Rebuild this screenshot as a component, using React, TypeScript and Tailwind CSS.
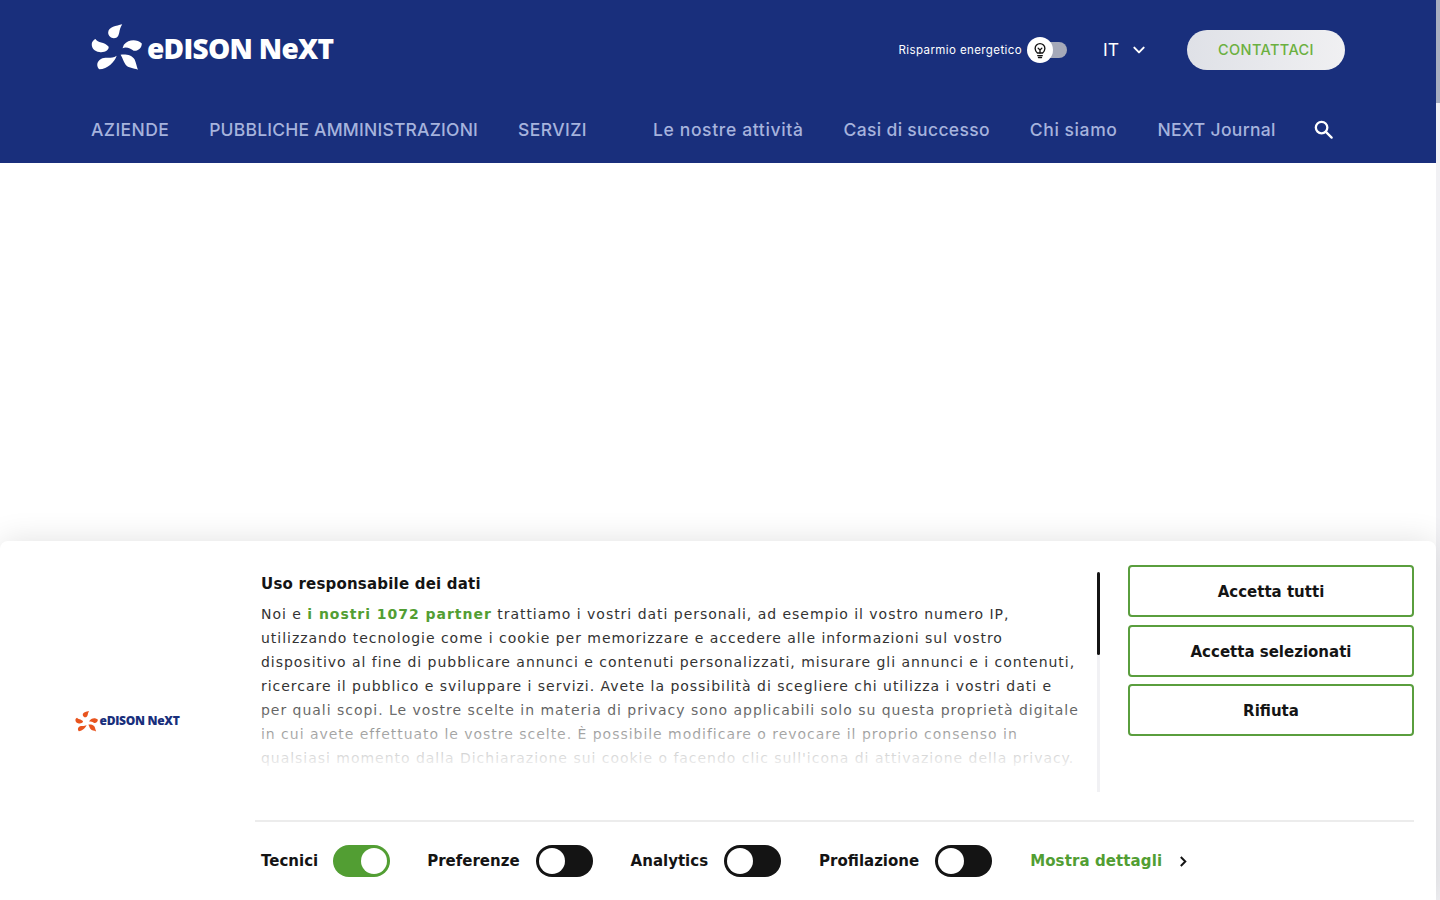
import React from "react";

function Mark({ className }: { className: string }) {
  return (
    <svg viewBox="30 30 165 150" className={className} fill="currentColor">
      <path d="M130 37C112 42 88 45 87 62C87 75 100 83 112 78C124 72 118 55 130 37Z" />
      <path d="M190 96C175 82 150 82 135 100L131 110C145 105 155 112 165 118C178 120 190 110 190 96Z" />
      <path d="M125 130C140 128 160 130 168 145C172 155 175 168 178 176C165 170 148 172 140 160C133 150 132 140 125 130Z" />
      <path d="M113 133C108 150 85 175 60 175C50 165 52 150 65 143C80 135 95 145 113 133Z" />
      <path d="M48 82C55 95 75 90 88 105C92 115 75 125 60 122C45 120 35 110 37 95C38 90 42 85 48 82Z" />
    </svg>
  );
}

function Toggle({ on }: { on?: boolean }) {
  return (
    <span className={`flex h-8 w-[57px] shrink-0 items-center rounded-full px-[3px] ${on ? "justify-end bg-[#529e33]" : "justify-start bg-[#141414]"}`}>
      <span className="h-[26px] w-[26px] rounded-full bg-white" />
    </span>
  );
}

function ActionButton({ children }: { children: React.ReactNode }) {
  return (
    <button className="flex h-[52px] w-[286px] items-center justify-center rounded-[4px] border-2 border-[#5a9e3e] bg-white pt-[2px] text-[15px] font-bold text-[#141414]">
      {children}
    </button>
  );
}

export default function App() {
  return (
    <div className="relative flex h-[900px] w-[1440px] overflow-hidden bg-white font-['DejaVu_Sans',sans-serif]">
      <main className="min-w-0 flex-1">
        <header className="flex h-[163px] flex-col bg-[#192f7c] pl-[91px] pr-[91px] font-['Inter',sans-serif]">
          <div className="flex h-[100px] items-center">
            <div className="flex items-center text-white">
              <Mark className="-ml-[2px] h-[49px] w-[55px] -translate-y-[4px]" />
              <span className="ml-[3px] -translate-y-[2px] font-['Open_Sans',sans-serif] text-[28px] font-extrabold leading-none tracking-[-0.7px]">eDISON NeXT</span>
            </div>
            <div className="ml-auto flex items-center">
              <span className="mt-[2px] text-[11.5px] tracking-[0.4px] text-white">Risparmio energetico</span>
              <span className="ml-[5px] flex h-4 w-10 items-center">
                <span className="relative z-10 flex h-[26px] w-[26px] items-center justify-center rounded-full bg-white">
                  <svg viewBox="0 0 24 24" className="h-[18px] w-[18px]" fill="none" stroke="#141414" strokeWidth="1.8" strokeLinecap="round" strokeLinejoin="round">
                    <path d="M8.5 16C7 14.6 5.5 13 5.5 10a6.5 6.5 0 0 1 13 0c0 3-1.500 4.600-3 6Z" />
                    <path d="M9 19.500h6M10 22h4M9.500 9.500 12 12l2.500-2.500M12 12v4" />
                  </svg>
                </span>
                <span className="-ml-[13px] h-4 w-[27px] rounded-r-full bg-[#a5a9b9]" />
              </span>
              <span className="ml-9 mt-[1px] text-[17.5px] text-white">IT</span>
              <svg viewBox="0 0 24 24" className="ml-[12px] h-[16px] w-[16px]" fill="none" stroke="white" strokeWidth="3" strokeLinecap="round" strokeLinejoin="round">
                <path d="m5 8.500 7 7 7-7" />
              </svg>
              <button className="ml-[40px] h-10 w-[158px] rounded-full bg-gradient-to-r from-[#dfe1e7] to-[#f0f0f2] text-[14.5px] font-medium tracking-[0.4px] text-[#6bb040]">CONTATTACI</button>
            </div>
          </div>
          <nav className="flex h-[60px] items-center text-[17.5px] font-medium text-[#a6b3dd]">
            <a className="tracking-[0.4px]">AZIENDE</a>
            <a className="ml-10 tracking-[0.2px]">PUBBLICHE AMMINISTRAZIONI</a>
            <a className="ml-10 tracking-[0.4px]">SERVIZI</a>
            <a className="ml-[66px] tracking-[0.65px]">Le nostre attività</a>
            <a className="ml-10 tracking-[0.33px]">Casi di successo</a>
            <a className="ml-10 tracking-[0.58px]">Chi siamo</a>
            <a className="ml-10 tracking-[0.33px]">NEXT Journal</a>
            <svg viewBox="0 0 24 24" className="ml-[36px] h-[23px] w-[23px] -translate-y-[1px]" fill="none" stroke="white" strokeWidth="2.400" strokeLinecap="round">
              <circle cx="10" cy="10" r="6" />
              <path d="m14.500 14.500 6 6" />
            </svg>
          </nav>
        </header>
      </main>

      <div className="h-full w-1 shrink-0 bg-[#f1f1f4]">
        <div className="h-[103px] bg-[#a9afc0]" />
      </div>

      <section className="absolute bottom-0 left-0 flex h-[359px] w-[1436px] rounded-t-[8px] bg-white text-[#141414] shadow-[0_0_32px_rgba(0,0,0,0.12)]">
        <div className="flex w-[253px] shrink-0 items-center justify-center">
          <div className="flex items-center text-[#e8541e]">
            <Mark className="h-[22px] w-[25px]" />
            <span className="ml-[1px] font-['Open_Sans',sans-serif] text-[12px] font-extrabold leading-none tracking-[-0.3px] text-[#192f7c]">eDISON NeXT</span>
          </div>
        </div>
        <div className="flex min-w-0 flex-1 flex-col pl-[2px] pr-[22px]">
          <div className="flex h-[281px] shrink-0 border-b-2 border-[#ececec] pt-6">
            <div className="flex w-[845px] shrink-0 pt-[7px]">
              <div className="relative h-[220px] w-[842px] overflow-hidden pl-[6px]">
                <h2 className="mt-[1px] text-[15px] font-bold leading-[22px] tracking-[0.2px]">Uso responsabile dei dati</h2>
                <p className="mt-[7px] whitespace-nowrap text-[14px] leading-6 tracking-[0.97px] text-[#333333]">
                  Noi e <a className="font-bold text-[#529e33]">i nostri 1072 partner</a> trattiamo i vostri dati personali, ad esempio il vostro numero IP,<br />
                  utilizzando tecnologie come i cookie per memorizzare e accedere alle informazioni sul vostro<br />
                  dispositivo al fine di pubblicare annunci e contenuti personalizzati, misurare gli annunci e i contenuti,<br />
                  ricercare il pubblico e sviluppare i servizi. Avete la possibilità di scegliere chi utilizza i vostri dati e<br />
                  per quali scopi. Le vostre scelte in materia di privacy sono applicabili solo su questa proprietà digitale<br />
                  in cui avete effettuato le vostre scelte. È possibile modificare o revocare il proprio consenso in<br />
                  qualsiasi momento dalla Dichiarazione sui cookie o facendo clic sull'icona di attivazione della privacy.
                </p>
                <div className="absolute bottom-0 left-0 h-[100px] w-full bg-gradient-to-b from-transparent via-[#ffffff99] via-45% to-white to-80%" />
              </div>
              <div className="h-[220px] w-[3px] shrink-0 bg-[#f1f1f4]">
                <div className="h-[83px] rounded-full bg-[#141414]" />
              </div>
            </div>
            <div className="ml-[28px] flex flex-col gap-2">
              <ActionButton>Accetta tutti</ActionButton>
              <ActionButton>Accetta selezionati</ActionButton>
              <div className="-mt-px"><ActionButton>Rifiuta</ActionButton></div>
            </div>
          </div>
          <div className="flex flex-1 items-start pl-[6px] pt-[23px] text-[15px] font-bold">
            <div className="flex items-center">
              <span>Tecnici</span><span className="ml-[15px]"><Toggle on /></span>
              <span className="ml-[37px]">Preferenze</span><span className="ml-[16px]"><Toggle /></span>
              <span className="ml-[38px]">Analytics</span><span className="ml-[16px]"><Toggle /></span>
              <span className="ml-[38px]">Profilazione</span><span className="ml-[16px]"><Toggle /></span>
              <span className="ml-[38px] tracking-[0.1px] text-[#529e33]">Mostra dettagli</span>
              <svg viewBox="0 0 10 14" className="ml-[17px] h-[13px] w-[9px]" fill="none" stroke="#141414" strokeWidth="2.200"><path d="m2 2 5 5-5 5" /></svg>
            </div>
          </div>
        </div>
      </section>
    </div>
  );
}
